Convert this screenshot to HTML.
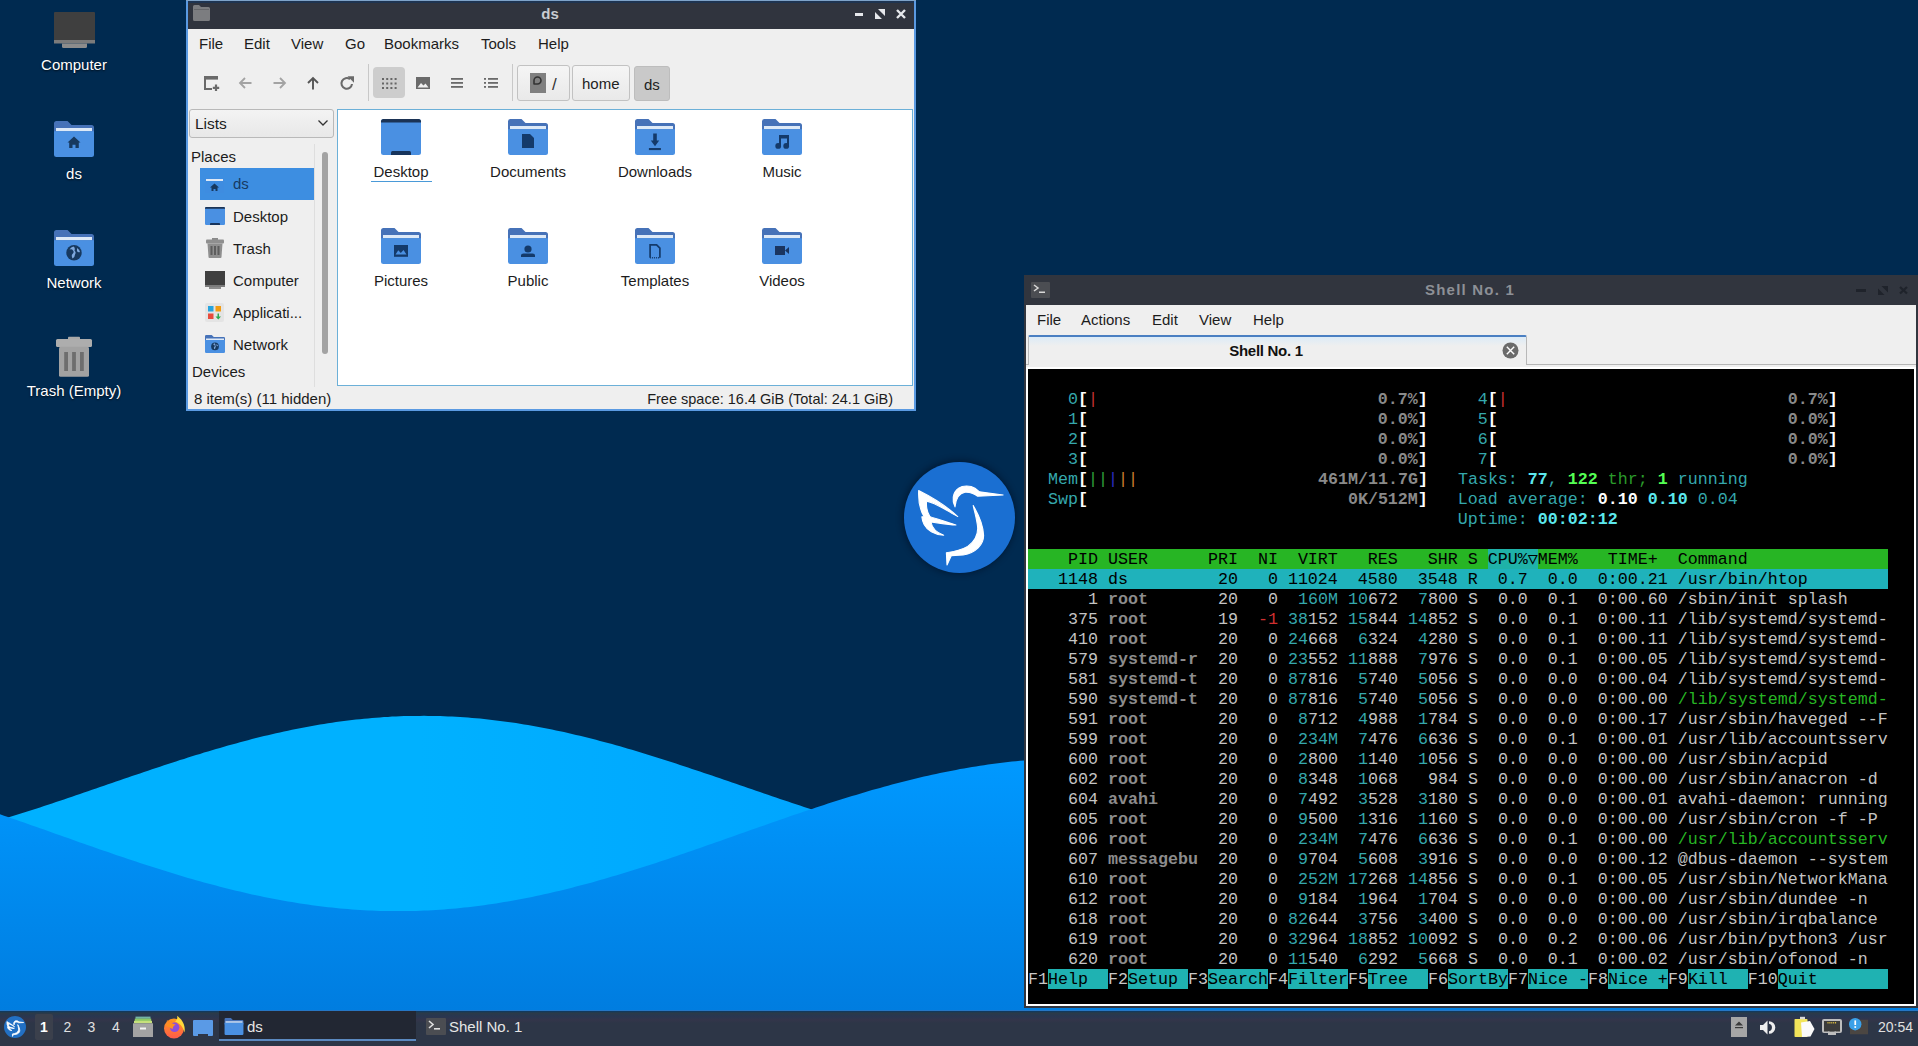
<!DOCTYPE html>
<html><head><meta charset="utf-8"><style>
*{margin:0;padding:0;box-sizing:border-box}
html,body{width:1918px;height:1046px;overflow:hidden;background:#002a50}
body{position:relative;font-family:"Liberation Sans",sans-serif;font-size:15px;color:#1c1c1c}
.a{position:absolute}
.bg{position:absolute;left:0;top:0}
.t{position:absolute;white-space:nowrap}
.dl{color:#fff;text-shadow:0 1px 2px rgba(0,0,0,.7)}
pre.term{position:absolute;font-family:"Liberation Mono",monospace;font-size:16.67px;line-height:20px;color:#c4c4c4;white-space:pre}
svg{position:absolute;overflow:visible}
</style></head>
<body>
<svg class="bg" width="1918" height="1046" viewBox="0 0 1918 1046">
<defs>
<linearGradient id="gl" gradientUnits="userSpaceOnUse" x1="420" y1="0" x2="860" y2="0"><stop offset="0" stop-color="#00b1ff"/><stop offset="1" stop-color="#00a4ff"/></linearGradient>
<linearGradient id="gm" gradientUnits="userSpaceOnUse" x1="0" y1="760" x2="0" y2="1010"><stop offset="0" stop-color="#0099ff"/><stop offset="1" stop-color="#007de0"/></linearGradient>
</defs>
<rect x="0" y="0" width="1918" height="1046" fill="#002a50"/>
<polygon fill="url(#gl)" points="0,820.0 4,818.8 8,817.5 12,816.3 16,815.1 20,813.8 24,812.5 28,811.3 32,810.0 36,808.7 40,807.4 44,806.1 48,804.7 52,803.4 56,802.1 60,800.7 64,799.4 68,798.0 72,796.7 76,795.3 80,793.9 84,792.6 88,791.2 92,789.8 96,788.4 100,787.1 104,785.7 108,784.3 112,782.9 116,781.6 120,780.2 124,778.8 128,777.4 132,776.1 136,774.7 140,773.4 144,772.0 148,770.7 152,769.3 156,768.0 160,766.7 164,765.3 168,764.0 172,762.7 176,761.4 180,760.1 184,758.9 188,757.6 192,756.3 196,755.1 200,753.9 204,752.6 208,751.4 212,750.2 216,749.1 220,747.9 224,746.7 228,745.6 232,744.5 236,743.4 240,742.3 244,741.2 248,740.2 252,739.1 256,738.1 260,737.1 264,736.1 268,735.2 272,734.2 276,733.3 280,732.4 284,731.5 288,730.7 292,729.8 296,729.0 300,728.2 304,727.5 308,726.7 312,726.0 316,725.3 320,724.6 324,723.9 328,723.3 332,722.7 336,722.1 340,721.6 344,721.0 348,720.5 352,720.0 356,719.6 360,719.2 364,718.7 368,718.4 372,718.0 376,717.7 380,717.4 384,717.1 388,716.9 392,716.6 396,716.4 400,716.3 404,716.1 408,716.0 412,715.9 416,715.9 420,715.9 424,715.8 428,715.9 432,715.9 436,716.0 440,716.1 444,716.2 448,716.4 452,716.6 456,716.8 460,717.0 464,717.3 468,717.6 472,717.9 476,718.2 480,718.6 484,719.0 488,719.4 492,719.9 496,720.4 500,720.9 504,721.4 508,721.9 512,722.5 516,723.1 520,723.7 524,724.4 528,725.0 532,725.7 536,726.5 540,727.2 544,728.0 548,728.7 552,729.6 556,730.4 560,731.2 564,732.1 568,733.0 572,733.9 576,734.9 580,735.8 584,736.8 588,737.8 592,738.8 596,739.8 600,740.9 604,741.9 608,743.0 612,744.1 616,745.2 620,746.3 624,747.5 628,748.7 632,749.8 636,751.0 640,752.2 644,753.4 648,754.7 652,755.9 656,757.2 660,758.4 664,759.7 668,761.0 672,762.3 676,763.6 680,764.9 684,766.2 688,767.5 692,768.9 696,770.2 700,771.5 704,772.9 708,774.2 712,775.6 716,777.0 720,778.3 724,779.7 728,781.1 732,782.5 736,783.8 740,785.2 744,786.6 748,788.0 752,789.3 756,790.7 760,792.1 764,793.5 768,794.8 772,796.2 776,797.6 780,798.9 784,800.3 788,801.6 792,802.9 796,804.3 800,805.6 804,806.9 808,808.2 812,809.5 816,810.8 820,812.1 824,813.4 828,814.6 832,815.9 836,817.1 840,818.3 844,819.6 848,820.8 852,821.9 856,823.1 860,824.3 864,825.4 868,826.5 872,827.7 876,828.7 880,829.8 884,830.9 888,831.9 892,833.0 896,834.0 900,835.0 904,835.9 908,836.9 912,837.8 916,838.7 920,839.6 924,840.5 928,841.3 932,842.1 936,842.9 940,843.7 944,844.5 948,845.2 952,845.9 956,846.6 960,847.3 964,847.9 968,848.6 972,849.2 976,849.7 980,850.3 984,850.8 988,851.3 992,851.7 996,852.2 1000,852.6 1004,853.0 1008,853.4 1012,853.7 1016,854.0 1020,854.3 1024,854.6 1028,854.8 1032,855.0 1036,855.2 1040,855.3 1044,855.5 1048,855.6 1052,855.6 1056,855.7 1060,855.7 1064,855.7 1068,855.6 1072,855.6 1076,855.5 1080,855.4 1084,855.2 1088,855.1 1092,854.9 1096,854.6 1100,854.4 1100,1046 0,1046"/>
<polygon fill="url(#gm)" points="0,812 0,814.3 4,815.7 8,817.1 12,818.4 16,819.8 20,821.2 24,822.6 28,824.0 32,825.4 36,826.8 40,828.2 44,829.6 48,831.1 52,832.5 56,833.9 60,835.3 64,836.7 68,838.1 72,839.5 76,841.0 80,842.4 84,843.8 88,845.2 92,846.6 96,848.0 100,849.4 104,850.7 108,852.1 112,853.5 116,854.9 120,856.2 124,857.6 128,858.9 132,860.3 136,861.6 140,862.9 144,864.2 148,865.5 152,866.8 156,868.1 160,869.3 164,870.6 168,871.8 172,873.1 176,874.3 180,875.5 184,876.7 188,877.9 192,879.0 196,880.2 200,881.3 204,882.4 208,883.5 212,884.6 216,885.6 220,886.7 224,887.7 228,888.7 232,889.7 236,890.7 240,891.6 244,892.6 248,893.5 252,894.4 256,895.3 260,896.1 264,896.9 268,897.7 272,898.5 276,899.3 280,900.0 284,900.8 288,901.5 292,902.1 296,902.8 300,903.4 304,904.0 308,904.6 312,905.2 316,905.7 320,906.2 324,906.7 328,907.2 332,907.6 336,908.0 340,908.4 344,908.8 348,909.1 352,909.4 356,909.7 360,910.0 364,910.2 368,910.4 372,910.6 376,910.7 380,910.9 384,911.0 388,911.1 392,911.1 396,911.1 400,911.1 404,911.1 408,911.1 412,911.0 416,910.9 420,910.7 424,910.6 428,910.4 432,910.2 436,910.0 440,909.7 444,909.4 448,909.1 452,908.8 456,908.4 460,908.0 464,907.6 468,907.2 472,906.7 476,906.2 480,905.7 484,905.2 488,904.6 492,904.0 496,903.4 500,902.8 504,902.1 508,901.4 512,900.7 516,900.0 520,899.3 524,898.5 528,897.7 532,896.9 536,896.1 540,895.2 544,894.3 548,893.5 552,892.5 556,891.6 560,890.7 564,889.7 568,888.7 572,887.7 576,886.6 580,885.6 584,884.5 588,883.5 592,882.4 596,881.2 600,880.1 604,879.0 608,877.8 612,876.6 616,875.4 620,874.2 624,873.0 628,871.8 632,870.6 636,869.3 640,868.0 644,866.8 648,865.5 652,864.2 656,862.9 660,861.5 664,860.2 668,858.9 672,857.5 676,856.2 680,854.8 684,853.4 688,852.1 692,850.7 696,849.3 700,847.9 704,846.5 708,845.1 712,843.7 716,842.3 720,840.9 724,839.5 728,838.1 732,836.7 736,835.3 740,833.8 744,832.4 748,831.0 752,829.6 756,828.2 760,826.8 764,825.4 768,824.0 772,822.6 776,821.2 780,819.8 784,818.4 788,817.0 792,815.6 796,814.3 800,812.9 804,811.6 808,810.2 812,808.9 816,807.6 820,806.2 824,804.9 828,803.6 832,802.3 836,801.1 840,799.8 844,798.5 848,797.3 852,796.1 856,794.9 860,793.7 864,792.5 868,791.3 872,790.1 876,789.0 880,787.9 884,786.8 888,785.7 892,784.6 896,783.5 900,782.5 904,781.5 908,780.4 912,779.5 916,778.5 920,777.5 924,776.6 928,775.7 932,774.8 936,773.9 940,773.1 944,772.2 948,771.4 952,770.7 956,769.9 960,769.1 964,768.4 968,767.7 972,767.1 976,766.4 980,765.8 984,765.2 988,764.6 992,764.0 996,763.5 1000,763.0 1004,762.5 1008,762.0 1012,761.6 1016,761.2 1020,760.8 1024,760.5 1028,760.1 1032,759.8 1036,759.5 1040,759.3 1044,759.0 1048,758.8 1052,758.7 1056,758.5 1060,758.4 1064,758.3 1068,758.2 1072,758.1 1076,758.1 1080,758.1 1084,758.2 1088,758.2 1092,758.3 1096,758.4 1100,758.5 1104,758.7 1108,758.9 1112,759.1 1116,759.3 1120,759.6 1124,759.9 1128,760.2 1132,760.5 1136,760.9 1140,761.3 1144,761.7 1148,762.1 1152,762.6 1156,763.1 1160,763.6 1164,764.1 1168,764.7 1172,765.3 1176,765.9 1180,766.5 1184,767.2 1188,767.9 1192,768.6 1196,769.3 1200,770.0 1204,770.8 1208,771.6 1212,772.4 1216,773.3 1220,774.1 1224,775.0 1228,775.9 1232,776.8 1236,777.7 1240,778.7 1244,779.7 1248,780.7 1252,781.7 1256,782.7 1260,783.7 1264,784.8 1268,785.9 1272,787.0 1276,788.1 1280,789.2 1284,790.4 1288,791.5 1292,792.7 1296,793.9 1300,795.1 1304,796.3 1308,797.6 1312,798.8 1316,800.1 1320,801.3 1324,802.6 1328,803.9 1332,805.2 1336,806.5 1340,807.8 1344,809.2 1348,810.5 1352,811.8 1356,813.2 1360,814.6 1364,815.9 1368,817.3 1372,818.7 1376,820.1 1380,821.5 1384,822.9 1388,824.3 1392,825.7 1396,827.1 1400,828.5 1404,829.9 1408,831.3 1412,832.7 1416,834.1 1420,835.5 1424,837.0 1428,838.4 1432,839.8 1436,841.2 1440,842.6 1444,844.0 1448,845.4 1452,846.8 1456,848.2 1460,849.6 1464,851.0 1468,852.4 1472,853.7 1476,855.1 1480,856.5 1484,857.8 1488,859.2 1492,860.5 1496,861.8 1500,863.1 1504,864.4 1508,865.7 1512,867.0 1516,868.3 1520,869.6 1524,870.8 1528,872.1 1532,873.3 1536,874.5 1540,875.7 1544,876.9 1548,878.1 1552,879.2 1556,880.4 1560,881.5 1564,882.6 1568,883.7 1572,884.8 1576,885.8 1580,886.9 1584,887.9 1588,888.9 1592,889.9 1596,890.9 1600,891.8 1604,892.7 1608,893.6 1612,894.5 1616,895.4 1620,896.3 1624,897.1 1628,897.9 1632,898.7 1636,899.4 1640,900.2 1644,900.9 1648,901.6 1652,902.3 1656,902.9 1660,903.5 1664,904.1 1668,904.7 1672,905.3 1676,905.8 1680,906.3 1684,906.8 1688,907.3 1692,907.7 1696,908.1 1700,908.5 1704,908.8 1708,909.2 1712,909.5 1716,909.8 1720,910.0 1724,910.2 1728,910.4 1732,910.6 1736,910.8 1740,910.9 1744,911.0 1748,911.1 1752,911.1 1756,911.1 1760,911.1 1764,911.1 1768,911.0 1772,911.0 1776,910.8 1780,910.7 1784,910.6 1788,910.4 1792,910.2 1796,909.9 1800,909.6 1804,909.4 1808,909.0 1812,908.7 1816,908.3 1820,907.9 1824,907.5 1828,907.1 1832,906.6 1836,906.1 1840,905.6 1844,905.1 1848,904.5 1852,903.9 1856,903.3 1860,902.7 1864,902.0 1868,901.3 1872,900.6 1876,899.9 1880,899.1 1884,898.4 1888,897.6 1892,896.8 1896,895.9 1900,895.1 1904,894.2 1908,893.3 1912,892.4 1916,891.4 1920,890.5 1918,1046 0,1046"/>
</svg>
<svg style="left:54px;top:12px" width="41" height="36" viewBox="0 0 41 36"><rect x="0" y="0" width="41" height="29" rx="1" fill="#3f3f3f"/>
<rect x="0" y="28" width="41" height="3.5" fill="#7b7b7b"/>
<path d="M8 31.5H33V34.5Q33 36 31.5 36H9.5Q8 36 8 34.5Z" fill="#8c8c8c"/></svg>
<div class="t dl" style="left:-26.0px;width:200px;text-align:center;top:57.30px;font-size:15px;line-height:15px;">Computer</div>
<svg style="left:54px;top:121px" width="40" height="36" viewBox="0 0 40 36"><path d="M0 2.5Q0 0 2.5 0H13.5L17.5 4H37.5Q40 4 40 6.5V14H0Z" fill="#4672b8"/>
<rect x="2" y="7" width="36" height="3.2" fill="#dde9f7"/>
<path d="M0 10.2H40V33.5Q40 36 37.5 36H2.5Q0 36 0 33.5Z" fill="#4a90e2"/><path d="M20 15.5L26.5 21.5H24.8V27H21.5V23.8H18.5V27H15.2V21.5H13.5Z" fill="#17395f"/></svg>
<div class="t dl" style="left:-26.0px;width:200px;text-align:center;top:166.30px;font-size:15px;line-height:15px;">ds</div>
<svg style="left:54px;top:230px" width="40" height="36" viewBox="0 0 40 36"><path d="M0 2.5Q0 0 2.5 0H13.5L17.5 4H37.5Q40 4 40 6.5V14H0Z" fill="#4672b8"/>
<rect x="2" y="7" width="36" height="3.2" fill="#dde9f7"/>
<path d="M0 10.2H40V33.5Q40 36 37.5 36H2.5Q0 36 0 33.5Z" fill="#4a90e2"/><circle cx="20" cy="22.8" r="7.7" fill="#17395f"/><path d="M15.5 19.5Q18 18.5 19 20.5Q20.5 22.5 18.5 24Q17 25 18.5 28.5Q21 27 21 24.5Q22.5 22.5 20.5 20.5Q21.5 18 19.5 16.5Q17 17 15.5 19.5Z" fill="#7fa9de"/><path d="M23 18Q25.5 19.5 26 22Q24 23 23 21Z" fill="#7fa9de"/></svg>
<div class="t dl" style="left:-26.0px;width:200px;text-align:center;top:275.30px;font-size:15px;line-height:15px;">Network</div>
<svg style="left:55px;top:336px" width="37" height="41" viewBox="0 0 37 41"><rect x="13" y="0.8" width="12" height="3" rx="0.8" fill="#a9a9a9"/>
<rect x="1" y="3" width="36" height="8" rx="1.5" fill="#adadad"/>
<rect x="4" y="10.8" width="30" height="30" rx="1.5" fill="#a2a2a2"/>
<rect x="9.2" y="16" width="3.8" height="19" fill="#6e6e6e"/>
<rect x="17.1" y="16" width="3.8" height="19" fill="#6e6e6e"/>
<rect x="25" y="16" width="3.8" height="19" fill="#6e6e6e"/></svg>
<div class="t dl" style="left:-26.0px;width:200px;text-align:center;top:383.30px;font-size:15px;line-height:15px;">Trash (Empty)</div>
<div class="a" style="left:904px;top:462px;width:110px;height:110px;border-radius:50%;box-shadow:0 0 6px 2px rgba(0,8,25,.45)"></div>
<svg style="left:903.5px;top:461.5px" width="111.0" height="111.0" viewBox="-71.5 -148.6 1222 1222"><circle cx="539.5" cy="462.4" r="611" fill="#1a6fd2"/><g fill="#ffffff" stroke="#ffffff" stroke-width="12" stroke-linejoin="round">
<path d="M490,345 C455,280 460,190 530,140 C580,105 660,110 710,140 L760,180 L1020,215 L740,228 C700,200 650,180 600,185 C540,195 500,250 490,345 Z"/>
<path d="M690,330 C750,430 800,540 805,660 C805,760 720,850 580,875 L450,882 L402,985 L395,850 C470,840 560,820 630,780 C700,730 740,660 740,580 C735,500 710,420 690,330 Z"/>
<path d="M90,165 C200,220 400,340 520,452 C420,400 280,300 178,282 C172,330 180,400 215,455 L150,455 C105,380 85,270 90,165 Z"/>
<path d="M125,455 L215,455 C300,480 420,520 500,545 C400,540 300,520 225,512 C235,570 280,625 365,658 C260,650 180,600 150,540 C135,510 128,480 125,455 Z"/>
</g></svg>
<div class="a" style="left:186px;top:0px;width:730px;height:411px;background:#5a9ae2"></div>
<div class="a" style="left:188px;top:1px;width:726px;height:28px;background:#30343e"></div>
<div class="a" style="left:188px;top:1px;width:726px;height:2px;background:#1e3451"></div>
<div class="a" style="left:186px;top:0px;width:730px;height:1px;background:#7fa3c8"></div>
<div class="a" style="left:188px;top:29px;width:726px;height:380px;background:#efefef"></div>
<svg style="left:193px;top:5px" width="17" height="16" viewBox="0 0 17 16"><path d="M0 1.5Q0 0 1.5 0H6L8 2H15.5Q17 2 17 3.5V14.5Q17 16 15.5 16H1.5Q0 16 0 14.5Z" fill="#7c7d80"/><rect x="1" y="4" width="15" height="1" fill="#66676a"/></svg>
<div class="t " style="left:450.0px;width:200px;text-align:center;top:6.30px;font-size:15px;line-height:15px;font-weight:bold;color:#c9ccd2">ds</div>
<div class="a" style="left:855px;top:13px;width:8px;height:2.5px;background:#e6e8ec"></div>
<svg style="left:875px;top:9px" width="10" height="10" viewBox="0 0 10 10"><path d="M0 3V10H7Z M3 0H10V7Z" fill="#e6e8ec"/></svg>
<svg style="left:896px;top:9px" width="10" height="10" viewBox="0 0 10 10"><path d="M1 1L9 9M9 1L1 9" stroke="#e6e8ec" stroke-width="2.4"/></svg>
<div class="t " style="left:199px;top:36.30px;font-size:15px;line-height:15px;">File</div>
<div class="t " style="left:244px;top:36.30px;font-size:15px;line-height:15px;">Edit</div>
<div class="t " style="left:291px;top:36.30px;font-size:15px;line-height:15px;">View</div>
<div class="t " style="left:345px;top:36.30px;font-size:15px;line-height:15px;">Go</div>
<div class="t " style="left:384px;top:36.30px;font-size:15px;line-height:15px;">Bookmarks</div>
<div class="t " style="left:481px;top:36.30px;font-size:15px;line-height:15px;">Tools</div>
<div class="t " style="left:538px;top:36.30px;font-size:15px;line-height:15px;">Help</div>
<svg style="left:204px;top:76px" width="16" height="15" viewBox="0 0 16 15"><rect x="0" y="0" width="14" height="3.6" fill="#6a6a6a"/><rect x="0" y="0" width="2" height="14" fill="#6a6a6a"/><rect x="0" y="12" width="8" height="2" fill="#6a6a6a"/><path d="M12 8.5V15M8.8 11.8H15.2" stroke="#6a6a6a" stroke-width="2.2"/></svg>
<svg style="left:239px;top:77px" width="13" height="12" viewBox="0 0 13 12"><path d="M6 1L1 6L6 11M1 6H12.5" fill="none" stroke="#a3a3a3" stroke-width="1.8"/></svg>
<svg style="left:273px;top:77px" width="13" height="12" viewBox="0 0 13 12"><path d="M7 1L12 6L7 11M12 6H0.5" fill="none" stroke="#a3a3a3" stroke-width="1.8"/></svg>
<svg style="left:307px;top:77px" width="12" height="13" viewBox="0 0 12 13"><path d="M1 6L6 1L11 6M6 1V12.5" fill="none" stroke="#555555" stroke-width="1.9"/></svg>
<svg style="left:340px;top:76px" width="15" height="14" viewBox="0 0 15 14"><path d="M12 8A5.3 5.3 0 1 1 10 3.2" fill="none" stroke="#6a6a6a" stroke-width="2.1"/><path d="M7.5 0.3H14V6.8Z" fill="#6a6a6a"/></svg>
<div class="a" style="left:368px;top:64px;width:1px;height:37px;background:#c8c8c8"></div>
<div class="a" style="left:373px;top:67px;width:32px;height:31px;background:#cdcdcd;border-radius:4px"></div>
<svg style="left:382px;top:78px" width="15" height="11" viewBox="0 0 15 11"><rect x="0.0" y="0.0" width="2" height="2" fill="#666"/><rect x="0.0" y="4.5" width="2" height="2" fill="#666"/><rect x="0.0" y="9.0" width="2" height="2" fill="#666"/><rect x="4.2" y="0.0" width="2" height="2" fill="#666"/><rect x="4.2" y="4.5" width="2" height="2" fill="#666"/><rect x="4.2" y="9.0" width="2" height="2" fill="#666"/><rect x="8.4" y="0.0" width="2" height="2" fill="#666"/><rect x="8.4" y="4.5" width="2" height="2" fill="#666"/><rect x="8.4" y="9.0" width="2" height="2" fill="#666"/><rect x="12.6" y="0.0" width="2" height="2" fill="#666"/><rect x="12.6" y="4.5" width="2" height="2" fill="#666"/><rect x="12.6" y="9.0" width="2" height="2" fill="#666"/></svg>
<svg style="left:416px;top:77px" width="14" height="12" viewBox="0 0 14 12"><rect x="0" y="0" width="14" height="12" fill="#6a6a6a"/><path d="M1.5 10.5L5 6L7.5 8.5L9.5 6.5L12.5 10.5Z" fill="#efefef"/></svg>
<svg style="left:451px;top:78px" width="12" height="10" viewBox="0 0 12 10"><rect x="0" y="0" width="12" height="1.8" fill="#6a6a6a"/><rect x="0" y="4" width="12" height="1.8" fill="#6a6a6a"/><rect x="0" y="8" width="12" height="1.8" fill="#6a6a6a"/></svg>
<svg style="left:484px;top:78px" width="14" height="10" viewBox="0 0 14 10"><rect x="0" y="0" width="2" height="1.8" fill="#6a6a6a"/><rect x="4" y="0" width="10" height="1.8" fill="#6a6a6a"/><rect x="0" y="4" width="2" height="1.8" fill="#6a6a6a"/><rect x="4" y="4" width="10" height="1.8" fill="#6a6a6a"/><rect x="0" y="8" width="2" height="1.8" fill="#6a6a6a"/><rect x="4" y="8" width="10" height="1.8" fill="#6a6a6a"/></svg>
<div class="a" style="left:512px;top:64px;width:1px;height:37px;background:#c8c8c8"></div>
<div class="a" style="left:517px;top:65px;width:53px;height:36px;background:linear-gradient(#f5f5f5,#e9e9e9);border:1px solid #c2c2c2;border-radius:3px"></div>
<div class="a" style="left:530px;top:73px;width:16px;height:20px;background:#7f7f7f"></div>
<svg style="left:532px;top:75px" width="11" height="11" viewBox="0 0 11 11"><path d="M2 9.5V5.5A3.5 3.5 0 1 1 5.5 9H2" fill="none" stroke="#333" stroke-width="1.6"/></svg>
<div class="t " style="left:552px;top:75.61px;font-size:17px;line-height:17px;color:#333">/</div>
<div class="a" style="left:572px;top:65px;width:58px;height:36px;background:linear-gradient(#f5f5f5,#e9e9e9);border:1px solid #c2c2c2;border-radius:3px"></div>
<div class="t " style="left:582px;top:76.30px;font-size:15px;line-height:15px;color:#222">home</div>
<div class="a" style="left:634px;top:66px;width:36px;height:35px;background:#c9c9c9;border:1px solid #bdbdbd;border-radius:3px"></div>
<div class="t " style="left:644px;top:77.30px;font-size:15px;line-height:15px;color:#222">ds</div>
<div class="a" style="left:189px;top:109px;width:145px;height:29px;background:linear-gradient(#f3f3f3,#e8e8e8);border:1px solid #b9b9b9;border-radius:3px"></div>
<div class="t " style="left:195px;top:115.88px;font-size:15.5px;line-height:15.5px;">Lists</div>
<svg style="left:318px;top:120px" width="10" height="6" viewBox="0 0 10 6"><path d="M0.5 0.5L5 5L9.5 0.5" fill="none" stroke="#333" stroke-width="1.3"/></svg>
<div class="t " style="left:191px;top:149.30px;font-size:15px;line-height:15px;">Places</div>
<div class="a" style="left:200px;top:168px;width:114px;height:32px;background:#3d8ee1"></div>
<div class="a" style="left:314px;top:144px;width:1px;height:243px;background:#dedede"></div>
<div class="a" style="left:322px;top:152px;width:6px;height:202px;background:#a3a3a3;border-radius:3px"></div>
<svg style="left:205px;top:178px" width="19" height="15" viewBox="0 0 19 15"><rect x="0" y="0" width="19" height="15" fill="#3e8ce0"/><rect x="1" y="1" width="17" height="2" fill="#dfe9f5"/><path d="M9.5 5.5L14 9.5H12.5V13H10.5V11H8.5V13H6.5V9.5H5Z" fill="#17395f"/></svg>
<div class="t " style="left:233px;top:176.30px;font-size:15px;line-height:15px;color:#173a63">ds</div>
<svg style="left:205px;top:207px" width="20" height="18" viewBox="0 0 40 36"><rect x="0" y="0" width="40" height="36" rx="2.5" fill="#4a90e2"/>
<path d="M0 2.5Q0 0 2.5 0H37.5Q40 0 40 2.5V3.6H0Z" fill="#1b3355"/>
<path d="M10 36V33.5Q10 32 11.5 32H28.5Q30 32 30 33.5V36Z" fill="#17345c"/></svg>
<div class="t " style="left:233px;top:209.30px;font-size:15px;line-height:15px;">Desktop</div>
<svg style="left:206px;top:238px" width="18" height="20" viewBox="0 0 18 20"><rect x="6" y="0" width="6" height="2" fill="#8a8a8a"/><rect x="0" y="1.5" width="18" height="4" rx="1" fill="#8f8f8f"/><path d="M1.5 5.5H16.5L15.5 19Q15.5 20 14.5 20H3.5Q2.5 20 2.5 19Z" fill="#8f8f8f"/><rect x="4.5" y="8" width="2" height="9" fill="#5d5d5d"/><rect x="8" y="8" width="2" height="9" fill="#5d5d5d"/><rect x="11.5" y="8" width="2" height="9" fill="#5d5d5d"/></svg>
<div class="t " style="left:233px;top:241.30px;font-size:15px;line-height:15px;">Trash</div>
<svg style="left:205px;top:271px" width="20" height="18" viewBox="0 0 20 18"><rect x="0" y="0" width="20" height="14.5" fill="#3f3f3f"/><rect x="0" y="14" width="20" height="2" fill="#7b7b7b"/><rect x="4" y="16" width="12" height="2" fill="#8c8c8c"/></svg>
<div class="t " style="left:233px;top:273.30px;font-size:15px;line-height:15px;">Computer</div>
<svg style="left:205px;top:303px" width="19" height="19" viewBox="0 0 19 19"><rect x="0" y="0" width="19" height="19" rx="2" fill="#e4e4e4"/><rect x="3" y="3" width="5.5" height="5.5" fill="#27a4dd"/><rect x="10.5" y="3" width="5.5" height="5.5" fill="#f39c12"/><rect x="3" y="10.5" width="5.5" height="5.5" fill="#e74c3c"/><path d="M12.5 10.5H14V13.5H16L13.25 16.5L10.5 13.5H12.5Z" fill="#2eaa4f"/></svg>
<div class="t " style="left:233px;top:305.30px;font-size:15px;line-height:15px;">Applicati...</div>
<svg style="left:205px;top:335px" width="20" height="18" viewBox="0 0 40 36"><path d="M0 2.5Q0 0 2.5 0H13.5L17.5 4H37.5Q40 4 40 6.5V14H0Z" fill="#4672b8"/>
<rect x="2" y="7" width="36" height="3.2" fill="#dde9f7"/>
<path d="M0 10.2H40V33.5Q40 36 37.5 36H2.5Q0 36 0 33.5Z" fill="#4a90e2"/><circle cx="20" cy="22.8" r="7.7" fill="#17395f"/><path d="M15.5 19.5Q18 18.5 19 20.5Q20.5 22.5 18.5 24Q17 25 18.5 28.5Q21 27 21 24.5Q22.5 22.5 20.5 20.5Q21.5 18 19.5 16.5Q17 17 15.5 19.5Z" fill="#7fa9de"/><path d="M23 18Q25.5 19.5 26 22Q24 23 23 21Z" fill="#7fa9de"/></svg>
<div class="t " style="left:233px;top:337.30px;font-size:15px;line-height:15px;">Network</div>
<div class="t " style="left:192px;top:364.30px;font-size:15px;line-height:15px;">Devices</div>
<div class="a" style="left:337px;top:109px;width:576px;height:277px;background:#ffffff;border:1px solid #6cb0d8"></div>
<svg style="left:381px;top:119px" width="40" height="36" viewBox="0 0 40 36"><rect x="0" y="0" width="40" height="36" rx="2.5" fill="#4a90e2"/>
<path d="M0 2.5Q0 0 2.5 0H37.5Q40 0 40 2.5V3.6H0Z" fill="#1b3355"/>
<path d="M10 36V33.5Q10 32 11.5 32H28.5Q30 32 30 33.5V36Z" fill="#17345c"/></svg>
<div class="t " style="left:301.0px;width:200px;text-align:center;top:164.30px;font-size:15px;line-height:15px;color:#1c1c1c">Desktop</div>
<svg style="left:508px;top:119px" width="40" height="36" viewBox="0 0 40 36"><path d="M0 2.5Q0 0 2.5 0H13.5L17.5 4H37.5Q40 4 40 6.5V14H0Z" fill="#4672b8"/>
<rect x="2" y="7" width="36" height="3.2" fill="#dde9f7"/>
<path d="M0 10.2H40V33.5Q40 36 37.5 36H2.5Q0 36 0 33.5Z" fill="#4a90e2"/><path d="M14 15H22L26 19V29H14Z" fill="#143a6a"/></svg>
<div class="t " style="left:428.0px;width:200px;text-align:center;top:164.30px;font-size:15px;line-height:15px;color:#1c1c1c">Documents</div>
<svg style="left:635px;top:119px" width="40" height="36" viewBox="0 0 40 36"><path d="M0 2.5Q0 0 2.5 0H13.5L17.5 4H37.5Q40 4 40 6.5V14H0Z" fill="#4672b8"/>
<rect x="2" y="7" width="36" height="3.2" fill="#dde9f7"/>
<path d="M0 10.2H40V33.5Q40 36 37.5 36H2.5Q0 36 0 33.5Z" fill="#4a90e2"/><path d="M18.2 14.5H21.8V21.5H24.2L20 27.2L15.8 21.5H18.2Z" fill="#143a6a"/><rect x="13.9" y="29" width="12" height="2.1" fill="#143a6a"/></svg>
<div class="t " style="left:555.0px;width:200px;text-align:center;top:164.30px;font-size:15px;line-height:15px;color:#1c1c1c">Downloads</div>
<svg style="left:762px;top:119px" width="40" height="36" viewBox="0 0 40 36"><path d="M0 2.5Q0 0 2.5 0H13.5L17.5 4H37.5Q40 4 40 6.5V14H0Z" fill="#4672b8"/>
<rect x="2" y="7" width="36" height="3.2" fill="#dde9f7"/>
<path d="M0 10.2H40V33.5Q40 36 37.5 36H2.5Q0 36 0 33.5Z" fill="#4a90e2"/><path d="M17 16H27V27H25V19.5H19V27H17Z" fill="#143a6a"/><circle cx="16.2" cy="26.9" r="2.9" fill="#143a6a"/><circle cx="24.2" cy="26.9" r="2.9" fill="#143a6a"/></svg>
<div class="t " style="left:682.0px;width:200px;text-align:center;top:164.30px;font-size:15px;line-height:15px;color:#1c1c1c">Music</div>
<div class="a" style="left:371px;top:181px;width:61px;height:1px;background:#4a9ad8"></div>
<svg style="left:381px;top:228px" width="40" height="36" viewBox="0 0 40 36"><path d="M0 2.5Q0 0 2.5 0H13.5L17.5 4H37.5Q40 4 40 6.5V14H0Z" fill="#4672b8"/>
<rect x="2" y="7" width="36" height="3.2" fill="#dde9f7"/>
<path d="M0 10.2H40V33.5Q40 36 37.5 36H2.5Q0 36 0 33.5Z" fill="#4a90e2"/><rect x="13" y="17" width="14" height="11.8" fill="#143a6a"/><path d="M14.5 26.5L17.3 22.3L19.8 25L22.5 22L25.5 26.5Z" fill="#4a90e2"/></svg>
<div class="t " style="left:301.0px;width:200px;text-align:center;top:273.30px;font-size:15px;line-height:15px;color:#1c1c1c">Pictures</div>
<svg style="left:508px;top:228px" width="40" height="36" viewBox="0 0 40 36"><path d="M0 2.5Q0 0 2.5 0H13.5L17.5 4H37.5Q40 4 40 6.5V14H0Z" fill="#4672b8"/>
<rect x="2" y="7" width="36" height="3.2" fill="#dde9f7"/>
<path d="M0 10.2H40V33.5Q40 36 37.5 36H2.5Q0 36 0 33.5Z" fill="#4a90e2"/><circle cx="20" cy="21" r="3.6" fill="#143a6a"/><path d="M13 29V27.2Q13 25.4 15.5 25.4H24.5Q27 25.4 27 27.2V29Z" fill="#143a6a"/></svg>
<div class="t " style="left:428.0px;width:200px;text-align:center;top:273.30px;font-size:15px;line-height:15px;color:#1c1c1c">Public</div>
<svg style="left:635px;top:228px" width="40" height="36" viewBox="0 0 40 36"><path d="M0 2.5Q0 0 2.5 0H13.5L17.5 4H37.5Q40 4 40 6.5V14H0Z" fill="#4672b8"/>
<rect x="2" y="7" width="36" height="3.2" fill="#dde9f7"/>
<path d="M0 10.2H40V33.5Q40 36 37.5 36H2.5Q0 36 0 33.5Z" fill="#4a90e2"/><path d="M15.1 29.8V16.8H21.6L24.9 20.2V29.8" fill="none" stroke="#143a6a" stroke-width="1.7"/><path d="M15.1 29.8H24.9" stroke="#143a6a" stroke-width="1.4" stroke-dasharray="1 1"/></svg>
<div class="t " style="left:555.0px;width:200px;text-align:center;top:273.30px;font-size:15px;line-height:15px;color:#1c1c1c">Templates</div>
<svg style="left:762px;top:228px" width="40" height="36" viewBox="0 0 40 36"><path d="M0 2.5Q0 0 2.5 0H13.5L17.5 4H37.5Q40 4 40 6.5V14H0Z" fill="#4672b8"/>
<rect x="2" y="7" width="36" height="3.2" fill="#dde9f7"/>
<path d="M0 10.2H40V33.5Q40 36 37.5 36H2.5Q0 36 0 33.5Z" fill="#4a90e2"/><rect x="13" y="18" width="10" height="9" fill="#1a3560"/><path d="M23 22.5L27 19V26Z" fill="#1a3560"/></svg>
<div class="t " style="left:682.0px;width:200px;text-align:center;top:273.30px;font-size:15px;line-height:15px;color:#1c1c1c">Videos</div>
<div class="t " style="left:194px;top:391.30px;font-size:15px;line-height:15px;">8 item(s) (11 hidden)</div>
<div class="t" style="right:1025px;top:391.73px;font-size:14.5px;line-height:14.5px">Free space: 16.4 GiB (Total: 24.1 GiB)</div>
<div class="a" style="left:1024px;top:275px;width:894px;height:733px;background:#31353e"></div>
<svg style="left:1031px;top:282px" width="19" height="16" viewBox="0 0 19 16"><rect x="0" y="0" width="19" height="16" rx="1" fill="#4b4d52"/><path d="M3 3L7 6L3 9" fill="none" stroke="#d8d8d8" stroke-width="1.5"/><rect x="8" y="9.5" width="6" height="1.5" fill="#d8d8d8"/></svg>
<div class="t " style="left:1370.0px;width:200px;text-align:center;top:282.30px;font-size:15px;line-height:15px;font-weight:bold;color:#8d9096;letter-spacing:1.2px">Shell No. 1</div>
<div class="a" style="left:1856px;top:289px;width:10px;height:2.5px;background:#1f232b"></div>
<svg style="left:1878px;top:286px" width="10" height="9" viewBox="0 0 10 9"><path d="M0 2.5V9H6.5Z M3.5 0H10V6.5Z" fill="#1f232b"/></svg>
<svg style="left:1898.5px;top:286px" width="9" height="8.5" viewBox="0 0 9 8.5"><path d="M1 1L8 7.5M8 1L1 7.5" stroke="#1f232b" stroke-width="2.3"/></svg>
<div class="a" style="left:1026px;top:305px;width:890px;height:701px;background:#efefef"></div>
<div class="t " style="left:1037px;top:312.30px;font-size:15px;line-height:15px;">File</div>
<div class="t " style="left:1081px;top:312.30px;font-size:15px;line-height:15px;">Actions</div>
<div class="t " style="left:1152px;top:312.30px;font-size:15px;line-height:15px;">Edit</div>
<div class="t " style="left:1199px;top:312.30px;font-size:15px;line-height:15px;">View</div>
<div class="t " style="left:1253px;top:312.30px;font-size:15px;line-height:15px;">Help</div>
<div class="a" style="left:1026px;top:364px;width:890px;height:1px;background:#b5b5b5"></div>
<div class="a" style="left:1028px;top:335px;width:499px;height:30px;background:linear-gradient(#dcebf7,#efefef 9px);border:1px solid #b8b8b8;border-bottom:none;border-top:2px solid #4a7fc2;border-radius:2px 2px 0 0"></div>
<div class="t " style="left:1166.0px;width:200px;text-align:center;top:343.30px;font-size:15px;line-height:15px;font-weight:bold;color:#111;letter-spacing:-0.3px">Shell No. 1</div>
<svg style="left:1502px;top:342px" width="17" height="17" viewBox="0 0 17 17"><circle cx="8.5" cy="8.5" r="8" fill="#6b6b6b"/><path d="M4.8 4.8L12.2 12.2M12.2 4.8L4.8 12.2" stroke="#ffffff" stroke-width="1.4"/></svg>
<div class="a" style="left:1026px;top:367px;width:890px;height:639px;background:#ffffff"></div>
<div class="a" style="left:1028px;top:369px;width:886px;height:635px;background:#000000"></div>
<div class="a" style="left:1028px;top:549px;width:860px;height:20px;background:#27b524"></div>
<div class="a" style="left:1488px;top:549px;width:50px;height:20px;background:#1fb2a8"></div>
<div class="a" style="left:1028px;top:569px;width:860px;height:20px;background:#1fb2bb"></div>
<div class="a" style="left:1048px;top:969px;width:60px;height:20px;background:#1fb2b2"></div>
<div class="a" style="left:1128px;top:969px;width:60px;height:20px;background:#1fb2b2"></div>
<div class="a" style="left:1208px;top:969px;width:60px;height:20px;background:#1fb2b2"></div>
<div class="a" style="left:1288px;top:969px;width:60px;height:20px;background:#1fb2b2"></div>
<div class="a" style="left:1368px;top:969px;width:60px;height:20px;background:#1fb2b2"></div>
<div class="a" style="left:1448px;top:969px;width:60px;height:20px;background:#1fb2b2"></div>
<div class="a" style="left:1528px;top:969px;width:60px;height:20px;background:#1fb2b2"></div>
<div class="a" style="left:1608px;top:969px;width:60px;height:20px;background:#1fb2b2"></div>
<div class="a" style="left:1688px;top:969px;width:60px;height:20px;background:#1fb2b2"></div>
<div class="a" style="left:1778px;top:969px;width:110px;height:20px;background:#1fb2b2"></div>
<pre class="term" style="left:1028px;top:370px"> 
    <span style="color:#35a8ad">0</span><span style="color:#ffffff;font-weight:bold">[</span><span style="color:#c83232">|</span>                            <span style="color:#8a8a8a;font-weight:bold">0.7%</span><span style="color:#ffffff;font-weight:bold">]</span>     <span style="color:#35a8ad">4</span><span style="color:#ffffff;font-weight:bold">[</span><span style="color:#c83232">|</span>                            <span style="color:#8a8a8a;font-weight:bold">0.7%</span><span style="color:#ffffff;font-weight:bold">]</span>
    <span style="color:#35a8ad">1</span><span style="color:#ffffff;font-weight:bold">[</span>                             <span style="color:#8a8a8a;font-weight:bold">0.0%</span><span style="color:#ffffff;font-weight:bold">]</span>     <span style="color:#35a8ad">5</span><span style="color:#ffffff;font-weight:bold">[</span>                             <span style="color:#8a8a8a;font-weight:bold">0.0%</span><span style="color:#ffffff;font-weight:bold">]</span>
    <span style="color:#35a8ad">2</span><span style="color:#ffffff;font-weight:bold">[</span>                             <span style="color:#8a8a8a;font-weight:bold">0.0%</span><span style="color:#ffffff;font-weight:bold">]</span>     <span style="color:#35a8ad">6</span><span style="color:#ffffff;font-weight:bold">[</span>                             <span style="color:#8a8a8a;font-weight:bold">0.0%</span><span style="color:#ffffff;font-weight:bold">]</span>
    <span style="color:#35a8ad">3</span><span style="color:#ffffff;font-weight:bold">[</span>                             <span style="color:#8a8a8a;font-weight:bold">0.0%</span><span style="color:#ffffff;font-weight:bold">]</span>     <span style="color:#35a8ad">7</span><span style="color:#ffffff;font-weight:bold">[</span>                             <span style="color:#8a8a8a;font-weight:bold">0.0%</span><span style="color:#ffffff;font-weight:bold">]</span>
  <span style="color:#35a8ad">Mem</span><span style="color:#ffffff;font-weight:bold">[</span><span style="color:#2f9f3a">|</span><span style="color:#2f9f3a">|</span><span style="color:#2c2cc0">|</span><span style="color:#cf7d2e">|</span><span style="color:#cf7d2e">|</span>                  <span style="color:#8a8a8a;font-weight:bold">461M/11.7G</span><span style="color:#ffffff;font-weight:bold">]</span>   <span style="color:#35a8ad">Tasks: </span><span style="color:#5ce8ee;font-weight:bold">77</span><span style="color:#35a8ad">, </span><span style="color:#54ff54;font-weight:bold">122</span><span style="color:#2a9a2a"> thr; </span><span style="color:#54ff54;font-weight:bold">1</span><span style="color:#35a8ad"> running</span>
  <span style="color:#35a8ad">Swp</span><span style="color:#ffffff;font-weight:bold">[</span>                          <span style="color:#8a8a8a;font-weight:bold">0K/512M</span><span style="color:#ffffff;font-weight:bold">]</span>   <span style="color:#35a8ad">Load average: </span><span style="color:#ffffff;font-weight:bold">0.10 </span><span style="color:#5ce8ee;font-weight:bold">0.10 </span><span style="color:#35a8ad">0.04</span>
                                           <span style="color:#35a8ad">Uptime: </span><span style="color:#5ce8ee;font-weight:bold">00:02:12</span>

<span style="color:#000000;background:#27b524">    PID USER      PRI  NI  VIRT   RES   SHR S </span><span style="color:#000000;background:#1fb2a8">CPU%▽</span><span style="color:#000000;background:#27b524">MEM%   TIME+  Command              </span>
<span style="color:#000000;background:#1fb2bb">   1148 ds         20   0 11024  4580  3548 R  0.7  0.0  0:00.21 /usr/bin/htop        </span>
<span style="color:#c4c4c4">      1 </span><span style="color:#8c8c8c;font-weight:bold">root     </span> <span style="color:#c4c4c4"> 20 </span><span style="color:#c4c4c4">  0 </span><span style="color:#35a8ad"> 160M</span> <span style="color:#35a8ad">10</span><span style="color:#c4c4c4">672</span>  <span style="color:#35a8ad">7</span><span style="color:#c4c4c4">800</span> <span style="color:#c4c4c4">S  0.0  0.1  0:00.60 </span><span style="color:#c4c4c4">/sbin/init splash</span>
<span style="color:#c4c4c4">    375 </span><span style="color:#8c8c8c;font-weight:bold">root     </span> <span style="color:#c4c4c4"> 19 </span><span style="color:#d03030"> -1</span> <span style="color:#35a8ad">38</span><span style="color:#c4c4c4">152</span> <span style="color:#35a8ad">15</span><span style="color:#c4c4c4">844</span> <span style="color:#35a8ad">14</span><span style="color:#c4c4c4">852</span> <span style="color:#c4c4c4">S  0.0  0.1  0:00.11 </span><span style="color:#c4c4c4">/lib/systemd/systemd-</span>
<span style="color:#c4c4c4">    410 </span><span style="color:#8c8c8c;font-weight:bold">root     </span> <span style="color:#c4c4c4"> 20 </span><span style="color:#c4c4c4">  0 </span><span style="color:#35a8ad">24</span><span style="color:#c4c4c4">668</span>  <span style="color:#35a8ad">6</span><span style="color:#c4c4c4">324</span>  <span style="color:#35a8ad">4</span><span style="color:#c4c4c4">280</span> <span style="color:#c4c4c4">S  0.0  0.1  0:00.11 </span><span style="color:#c4c4c4">/lib/systemd/systemd-</span>
<span style="color:#c4c4c4">    579 </span><span style="color:#8c8c8c;font-weight:bold">systemd-r</span> <span style="color:#c4c4c4"> 20 </span><span style="color:#c4c4c4">  0 </span><span style="color:#35a8ad">23</span><span style="color:#c4c4c4">552</span> <span style="color:#35a8ad">11</span><span style="color:#c4c4c4">888</span>  <span style="color:#35a8ad">7</span><span style="color:#c4c4c4">976</span> <span style="color:#c4c4c4">S  0.0  0.1  0:00.05 </span><span style="color:#c4c4c4">/lib/systemd/systemd-</span>
<span style="color:#c4c4c4">    581 </span><span style="color:#8c8c8c;font-weight:bold">systemd-t</span> <span style="color:#c4c4c4"> 20 </span><span style="color:#c4c4c4">  0 </span><span style="color:#35a8ad">87</span><span style="color:#c4c4c4">816</span>  <span style="color:#35a8ad">5</span><span style="color:#c4c4c4">740</span>  <span style="color:#35a8ad">5</span><span style="color:#c4c4c4">056</span> <span style="color:#c4c4c4">S  0.0  0.0  0:00.04 </span><span style="color:#c4c4c4">/lib/systemd/systemd-</span>
<span style="color:#c4c4c4">    590 </span><span style="color:#8c8c8c;font-weight:bold">systemd-t</span> <span style="color:#c4c4c4"> 20 </span><span style="color:#c4c4c4">  0 </span><span style="color:#35a8ad">87</span><span style="color:#c4c4c4">816</span>  <span style="color:#35a8ad">5</span><span style="color:#c4c4c4">740</span>  <span style="color:#35a8ad">5</span><span style="color:#c4c4c4">056</span> <span style="color:#c4c4c4">S  0.0  0.0  0:00.00 </span><span style="color:#27b524">/lib/systemd/systemd-</span>
<span style="color:#c4c4c4">    591 </span><span style="color:#8c8c8c;font-weight:bold">root     </span> <span style="color:#c4c4c4"> 20 </span><span style="color:#c4c4c4">  0 </span> <span style="color:#35a8ad">8</span><span style="color:#c4c4c4">712</span>  <span style="color:#35a8ad">4</span><span style="color:#c4c4c4">988</span>  <span style="color:#35a8ad">1</span><span style="color:#c4c4c4">784</span> <span style="color:#c4c4c4">S  0.0  0.0  0:00.17 </span><span style="color:#c4c4c4">/usr/sbin/haveged --F</span>
<span style="color:#c4c4c4">    599 </span><span style="color:#8c8c8c;font-weight:bold">root     </span> <span style="color:#c4c4c4"> 20 </span><span style="color:#c4c4c4">  0 </span><span style="color:#35a8ad"> 234M</span>  <span style="color:#35a8ad">7</span><span style="color:#c4c4c4">476</span>  <span style="color:#35a8ad">6</span><span style="color:#c4c4c4">636</span> <span style="color:#c4c4c4">S  0.0  0.1  0:00.01 </span><span style="color:#c4c4c4">/usr/lib/accountsserv</span>
<span style="color:#c4c4c4">    600 </span><span style="color:#8c8c8c;font-weight:bold">root     </span> <span style="color:#c4c4c4"> 20 </span><span style="color:#c4c4c4">  0 </span> <span style="color:#35a8ad">2</span><span style="color:#c4c4c4">800</span>  <span style="color:#35a8ad">1</span><span style="color:#c4c4c4">140</span>  <span style="color:#35a8ad">1</span><span style="color:#c4c4c4">056</span> <span style="color:#c4c4c4">S  0.0  0.0  0:00.00 </span><span style="color:#c4c4c4">/usr/sbin/acpid</span>
<span style="color:#c4c4c4">    602 </span><span style="color:#8c8c8c;font-weight:bold">root     </span> <span style="color:#c4c4c4"> 20 </span><span style="color:#c4c4c4">  0 </span> <span style="color:#35a8ad">8</span><span style="color:#c4c4c4">348</span>  <span style="color:#35a8ad">1</span><span style="color:#c4c4c4">068</span> <span style="color:#c4c4c4">  984</span> <span style="color:#c4c4c4">S  0.0  0.0  0:00.00 </span><span style="color:#c4c4c4">/usr/sbin/anacron -d</span>
<span style="color:#c4c4c4">    604 </span><span style="color:#8c8c8c;font-weight:bold">avahi    </span> <span style="color:#c4c4c4"> 20 </span><span style="color:#c4c4c4">  0 </span> <span style="color:#35a8ad">7</span><span style="color:#c4c4c4">492</span>  <span style="color:#35a8ad">3</span><span style="color:#c4c4c4">528</span>  <span style="color:#35a8ad">3</span><span style="color:#c4c4c4">180</span> <span style="color:#c4c4c4">S  0.0  0.0  0:00.01 </span><span style="color:#c4c4c4">avahi-daemon: running</span>
<span style="color:#c4c4c4">    605 </span><span style="color:#8c8c8c;font-weight:bold">root     </span> <span style="color:#c4c4c4"> 20 </span><span style="color:#c4c4c4">  0 </span> <span style="color:#35a8ad">9</span><span style="color:#c4c4c4">500</span>  <span style="color:#35a8ad">1</span><span style="color:#c4c4c4">316</span>  <span style="color:#35a8ad">1</span><span style="color:#c4c4c4">160</span> <span style="color:#c4c4c4">S  0.0  0.0  0:00.00 </span><span style="color:#c4c4c4">/usr/sbin/cron -f -P</span>
<span style="color:#c4c4c4">    606 </span><span style="color:#8c8c8c;font-weight:bold">root     </span> <span style="color:#c4c4c4"> 20 </span><span style="color:#c4c4c4">  0 </span><span style="color:#35a8ad"> 234M</span>  <span style="color:#35a8ad">7</span><span style="color:#c4c4c4">476</span>  <span style="color:#35a8ad">6</span><span style="color:#c4c4c4">636</span> <span style="color:#c4c4c4">S  0.0  0.1  0:00.00 </span><span style="color:#27b524">/usr/lib/accountsserv</span>
<span style="color:#c4c4c4">    607 </span><span style="color:#8c8c8c;font-weight:bold">messagebu</span> <span style="color:#c4c4c4"> 20 </span><span style="color:#c4c4c4">  0 </span> <span style="color:#35a8ad">9</span><span style="color:#c4c4c4">704</span>  <span style="color:#35a8ad">5</span><span style="color:#c4c4c4">608</span>  <span style="color:#35a8ad">3</span><span style="color:#c4c4c4">916</span> <span style="color:#c4c4c4">S  0.0  0.0  0:00.12 </span><span style="color:#c4c4c4">@dbus-daemon --system</span>
<span style="color:#c4c4c4">    610 </span><span style="color:#8c8c8c;font-weight:bold">root     </span> <span style="color:#c4c4c4"> 20 </span><span style="color:#c4c4c4">  0 </span><span style="color:#35a8ad"> 252M</span> <span style="color:#35a8ad">17</span><span style="color:#c4c4c4">268</span> <span style="color:#35a8ad">14</span><span style="color:#c4c4c4">856</span> <span style="color:#c4c4c4">S  0.0  0.1  0:00.05 </span><span style="color:#c4c4c4">/usr/sbin/NetworkMana</span>
<span style="color:#c4c4c4">    612 </span><span style="color:#8c8c8c;font-weight:bold">root     </span> <span style="color:#c4c4c4"> 20 </span><span style="color:#c4c4c4">  0 </span> <span style="color:#35a8ad">9</span><span style="color:#c4c4c4">184</span>  <span style="color:#35a8ad">1</span><span style="color:#c4c4c4">964</span>  <span style="color:#35a8ad">1</span><span style="color:#c4c4c4">704</span> <span style="color:#c4c4c4">S  0.0  0.0  0:00.00 </span><span style="color:#c4c4c4">/usr/sbin/dundee -n</span>
<span style="color:#c4c4c4">    618 </span><span style="color:#8c8c8c;font-weight:bold">root     </span> <span style="color:#c4c4c4"> 20 </span><span style="color:#c4c4c4">  0 </span><span style="color:#35a8ad">82</span><span style="color:#c4c4c4">644</span>  <span style="color:#35a8ad">3</span><span style="color:#c4c4c4">756</span>  <span style="color:#35a8ad">3</span><span style="color:#c4c4c4">400</span> <span style="color:#c4c4c4">S  0.0  0.0  0:00.00 </span><span style="color:#c4c4c4">/usr/sbin/irqbalance</span>
<span style="color:#c4c4c4">    619 </span><span style="color:#8c8c8c;font-weight:bold">root     </span> <span style="color:#c4c4c4"> 20 </span><span style="color:#c4c4c4">  0 </span><span style="color:#35a8ad">32</span><span style="color:#c4c4c4">964</span> <span style="color:#35a8ad">18</span><span style="color:#c4c4c4">852</span> <span style="color:#35a8ad">10</span><span style="color:#c4c4c4">092</span> <span style="color:#c4c4c4">S  0.0  0.2  0:00.06 </span><span style="color:#c4c4c4">/usr/bin/python3 /usr</span>
<span style="color:#c4c4c4">    620 </span><span style="color:#8c8c8c;font-weight:bold">root     </span> <span style="color:#c4c4c4"> 20 </span><span style="color:#c4c4c4">  0 </span><span style="color:#35a8ad">11</span><span style="color:#c4c4c4">540</span>  <span style="color:#35a8ad">6</span><span style="color:#c4c4c4">292</span>  <span style="color:#35a8ad">5</span><span style="color:#c4c4c4">668</span> <span style="color:#c4c4c4">S  0.0  0.1  0:00.02 </span><span style="color:#c4c4c4">/usr/sbin/ofonod -n</span>
<span style="color:#c8c8c8">F1</span><span style="color:#000000;background:#1fb2b2">Help  </span><span style="color:#c8c8c8">F2</span><span style="color:#000000;background:#1fb2b2">Setup </span><span style="color:#c8c8c8">F3</span><span style="color:#000000;background:#1fb2b2">Search</span><span style="color:#c8c8c8">F4</span><span style="color:#000000;background:#1fb2b2">Filter</span><span style="color:#c8c8c8">F5</span><span style="color:#000000;background:#1fb2b2">Tree  </span><span style="color:#c8c8c8">F6</span><span style="color:#000000;background:#1fb2b2">SortBy</span><span style="color:#c8c8c8">F7</span><span style="color:#000000;background:#1fb2b2">Nice -</span><span style="color:#c8c8c8">F8</span><span style="color:#000000;background:#1fb2b2">Nice +</span><span style="color:#c8c8c8">F9</span><span style="color:#000000;background:#1fb2b2">Kill  </span><span style="color:#c8c8c8">F10</span><span style="color:#000000;background:#1fb2b2">Quit       </span></pre>
<div class="a" style="left:0px;top:1010px;width:1918px;height:36px;background:linear-gradient(#2676c4 0px,#2676c4 1px,#12395c 1.5px,#2a3a48 3px,#283650 6px,#33354a 10px,#2d3647 13px)"></div>
<svg style="left:4px;top:1016px" width="22" height="22" viewBox="-71.5 -148.6 1222 1222"><circle cx="539.5" cy="462.4" r="611" fill="#2270c4"/><g fill="#ffffff" stroke="#ffffff" stroke-width="45" stroke-linejoin="round">
<path d="M490,345 C455,280 460,190 530,140 C580,105 660,110 710,140 L760,180 L1020,215 L740,228 C700,200 650,180 600,185 C540,195 500,250 490,345 Z"/>
<path d="M690,330 C750,430 800,540 805,660 C805,760 720,850 580,875 L450,882 L402,985 L395,850 C470,840 560,820 630,780 C700,730 740,660 740,580 C735,500 710,420 690,330 Z"/>
<path d="M90,165 C200,220 400,340 520,452 C420,400 280,300 178,282 C172,330 180,400 215,455 L150,455 C105,380 85,270 90,165 Z"/>
<path d="M125,455 L215,455 C300,480 420,520 500,545 C400,540 300,520 225,512 C235,570 280,625 365,658 C260,650 180,600 150,540 C135,510 128,480 125,455 Z"/>
</g></svg>
<div class="a" style="left:35px;top:1014px;width:18px;height:26px;background:#3b404c;border-radius:2px"></div>
<div class="t " style="left:34.0px;width:20px;text-align:center;top:1020.15px;font-size:14px;line-height:14px;color:#fff;font-weight:bold">1</div>
<div class="t " style="left:57.5px;width:20px;text-align:center;top:1020.15px;font-size:14px;line-height:14px;color:#e0e0e0">2</div>
<div class="t " style="left:81.5px;width:20px;text-align:center;top:1020.15px;font-size:14px;line-height:14px;color:#e0e0e0">3</div>
<div class="t " style="left:106.0px;width:20px;text-align:center;top:1020.15px;font-size:14px;line-height:14px;color:#e0e0e0">4</div>
<svg style="left:133px;top:1016px" width="20" height="21" viewBox="0 0 20 21"><rect x="2.5" y="0.6" width="15" height="2.2" fill="#73b3a6"/><rect x="1.8" y="2.6" width="16.4" height="2.4" fill="#8cc865"/><rect x="1" y="4.8" width="18" height="2.6" fill="#c6e07c"/><rect x="0" y="7.3" width="20" height="13.7" fill="#a3a3a3"/><rect x="7" y="11.5" width="6" height="2" fill="#f4f4f4"/></svg>
<svg style="left:163px;top:1015px" width="22" height="23" viewBox="0 0 22 23"><defs><linearGradient id="ffo" x1="0" y1="0" x2="0" y2="1"><stop offset="0" stop-color="#ff9a1f"/><stop offset="1" stop-color="#ff5a4a"/></linearGradient></defs><circle cx="11" cy="13.5" r="10" fill="url(#ffo)"/><path d="M14 0.8C18 3.5 23 9 21.5 17.5C20 12 17 8 12 6.8C14 5 14.8 3 14 0.8Z" fill="#ffd93b"/><path d="M3.5 5L6.2 8.3L8.3 5.2L10 8Z" fill="#ff8a22"/><circle cx="11.6" cy="12.3" r="4.8" fill="#8c4ddb"/><path d="M2.5 9.5C6 7.5 10 7.8 12.8 9.8C11 10.3 9.6 11.8 9.8 14C7 13 4.5 11.5 2.5 9.5Z" fill="#ff8f20"/></svg>
<svg style="left:193px;top:1020px" width="20" height="16" viewBox="0 0 20 16"><rect x="0" y="0" width="20" height="16" rx="1" fill="#5a9ae6"/><rect x="5" y="14" width="10" height="2" fill="#2e3647"/></svg>
<div class="a" style="left:219px;top:1011px;width:197px;height:28px;background:#222733"></div>
<div class="a" style="left:219px;top:1039px;width:197px;height:2px;background:#5b89c0"></div>
<svg style="left:224px;top:1018px" width="20" height="17" viewBox="0 0 40 36"><path d="M0 2.5Q0 0 2.5 0H13.5L17.5 4H37.5Q40 4 40 6.5V14H0Z" fill="#4672b8"/>
<rect x="2" y="7" width="36" height="3.2" fill="#dde9f7"/>
<path d="M0 10.2H40V33.5Q40 36 37.5 36H2.5Q0 36 0 33.5Z" fill="#4a90e2"/></svg>
<div class="t " style="left:247px;top:1019.30px;font-size:15px;line-height:15px;color:#e6e6e6">ds</div>
<svg style="left:426px;top:1018px" width="20" height="17" viewBox="0 0 20 17"><rect x="0" y="0" width="20" height="17" rx="1" fill="#4b4d52"/><path d="M3 3L7 6.5L3 10" fill="none" stroke="#e0e0e0" stroke-width="1.6"/><rect x="8" y="10" width="6" height="1.6" fill="#e0e0e0"/></svg>
<div class="t " style="left:449px;top:1019.30px;font-size:15px;line-height:15px;color:#e6e6e6">Shell No. 1</div>
<div class="a" style="left:1731px;top:1017px;width:16px;height:20px;background:#a6a6a6"></div>
<svg style="left:1734px;top:1021px" width="10" height="8" viewBox="0 0 10 8"><path d="M5 0.5L9 4.5H1Z" fill="#3a3a3a"/><rect x="1" y="6" width="8" height="1.2" fill="#3a3a3a"/></svg>
<svg style="left:1760px;top:1020px" width="16" height="15" viewBox="0 0 16 15"><path d="M0 5H3L7.5 0.5V14.5L3 10H0Z" fill="#eeeeee"/><path d="M9 1.2A6.3 6.3 0 0 1 9 13.8V11.2A3.8 3.8 0 0 0 9 3.8Z" fill="#eeeeee"/></svg>
<svg style="left:1794px;top:1016px" width="22" height="22" viewBox="0 0 22 22"><rect x="0.5" y="3" width="13" height="18" rx="0.8" fill="#f2e45a"/><rect x="6" y="0.8" width="5" height="2.5" fill="#d8d8d8"/><path d="M7 6.5L16 5L20.5 13L16.5 20.5L8 21Z" fill="#fafafa"/></svg>
<svg style="left:1822px;top:1019px" width="20" height="16" viewBox="0 0 20 16"><rect x="0" y="0" width="20" height="14" rx="2" fill="#bdbdbd"/><rect x="2" y="2" width="16" height="10.5" fill="#3b3b3b"/><path d="M5.5 3.8H14.5" stroke="#e8c640" stroke-width="1.6" stroke-dasharray="1 0.9"/><path d="M6 12.5H14V16H6Z" fill="#bdbdbd"/><rect x="7.5" y="10.5" width="5" height="2" fill="#3b3b3b"/></svg>
<svg style="left:1849px;top:1017px" width="20" height="18" viewBox="0 0 20 18"><rect x="1" y="2.8" width="18" height="14.5" fill="#4b4642"/><circle cx="6.2" cy="7.2" r="6.2" fill="#3aa0e8"/><rect x="5.4" y="3.4" width="1.7" height="4.6" fill="#fff"/><rect x="5.4" y="9.2" width="1.7" height="1.7" fill="#fff"/></svg>
<div class="t " style="left:1878px;top:1020.15px;font-size:14px;line-height:14px;color:#e0e0e0">20:54</div>
</body></html>
